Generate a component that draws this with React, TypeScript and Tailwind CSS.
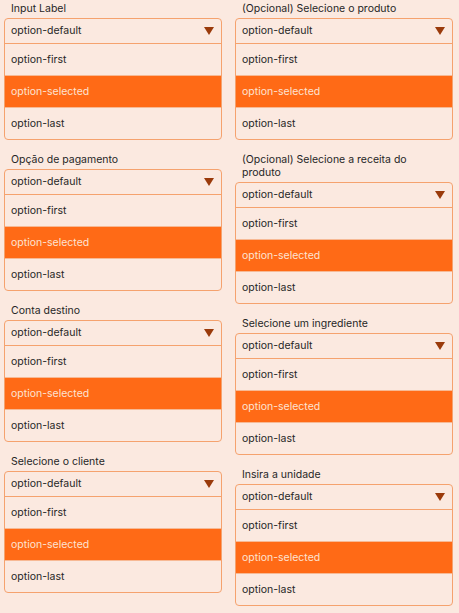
const options = ["option-first", "option-selected", "option-last"];

const leftFields = [
  "Input Label",
  "Opção de pagamento",
  "Conta destino",
  "Selecione o cliente",
];

const rightFields = [
  "(Opcional) Selecione o produto",
  "(Opcional) Selecione a receita do produto",
  "Selecione um ingrediente",
  "Insira a unidade",
];

const SelectField = ({ label }: { label: string }) => {
  return (
    <div className="flex flex-col">
      <label className="px-[7px] mb-[3px] text-[10.5px] leading-[13px] text-[#262626]">
        {label}
      </label>
      <div className="flex flex-col border border-[#f5a26e] rounded-[4px] overflow-hidden bg-[#fbe9e0]">
        {/* Header */}
        <div className="h-[25px] flex items-center justify-between pl-[6px] pr-[7px] border-b border-[#f5a26e]">
          <span className="text-[10.5px] text-[#262626]">option-default</span>
          <svg width="10" height="8" viewBox="0 0 10 8">
            <path d="M0 0 H10 L5 8 Z" fill="#9a3a0b" />
          </svg>
        </div>

        {/* Options */}
        {options.map((opt, i) => (
          <div
            key={opt}
            className={`flex items-center pl-[6px] text-[10.5px] ${
              i < options.length - 1
                ? "h-[32px] border-b border-[#f7b994]"
                : "h-[31px]"
            } ${
              opt === "option-selected"
                ? "bg-[#ff6a16] text-[#fde3d3]"
                : "text-[#262626]"
            }`}
          >
            {opt}
          </div>
        ))}
      </div>
    </div>
  );
};

const App = () => {
  return (
    <div className="w-full min-h-screen bg-[#fbe9e0] pt-[2px] pl-[4px] pr-[6px] font-['Inter',sans-serif]">
      <div className="grid grid-cols-2 gap-x-[13px]">
        <div className="flex flex-col gap-[13px]">
          {leftFields.map((f) => (
            <SelectField key={f} label={f} />
          ))}
        </div>
        <div className="flex flex-col gap-[13px]">
          {rightFields.map((f) => (
            <SelectField key={f} label={f} />
          ))}
        </div>
      </div>
    </div>
  );
};

export default App;
